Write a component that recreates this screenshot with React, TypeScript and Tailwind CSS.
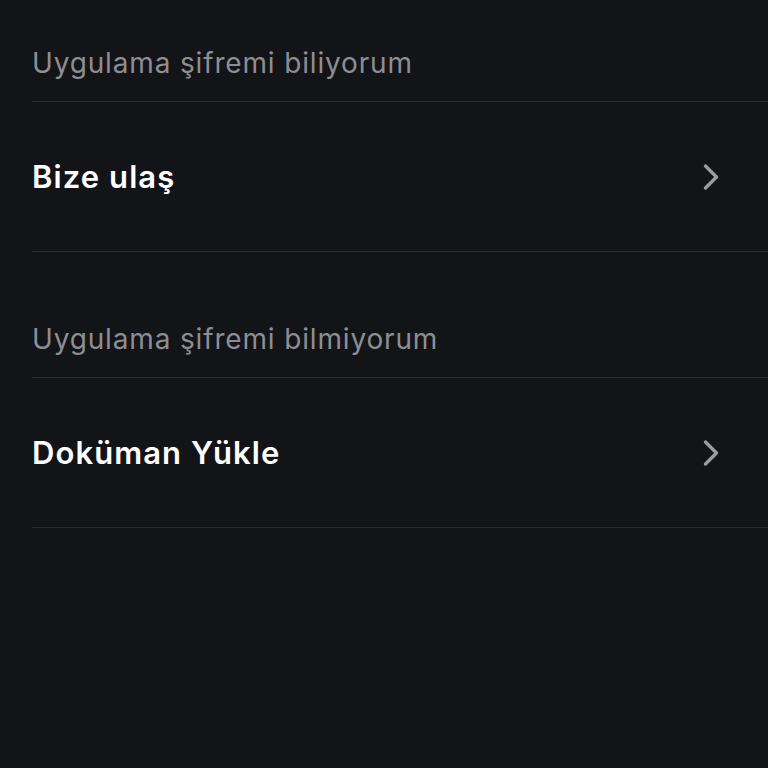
import React from 'react';

const Chevron = () => (
  <svg width="24" height="28" viewBox="0 0 24 28" fill="none" className="shrink-0">
    <path d="M7.5 3 L18.5 14 L7.5 25" stroke="#9b9ca1" strokeWidth="3.4" strokeLinecap="round" strokeLinejoin="round" />
  </svg>
);

const SectionHeader: React.FC<{ title: string; height: string }> = ({ title, height }) => (
  <div className={`flex items-end ${height} pb-[23px] border-b border-[#2a2b30]`}>
    <span className="text-[28px] leading-[30px] tracking-[0.03em] text-[#8d8e93]">{title}</span>
  </div>
);

const Row: React.FC<{ label: string }> = ({ label }) => (
  <div className="flex items-center justify-between h-[150px] border-b border-[#2a2b30] pr-[46px]">
    <span className="text-[31px] leading-[36px] tracking-[0.035em] font-semibold text-white">{label}</span>
    <Chevron />
  </div>
);

export default function App() {
  return (
    <div
      className="w-[768px] h-[768px] bg-[#131418] overflow-hidden pl-[32px]"
      style={{ fontFamily: 'Inter, "Noto Sans", sans-serif' }}
    >
      <SectionHeader title="Uygulama şifremi biliyorum" height="h-[102px]" />
      <Row label="Bize ulaş" />
      <SectionHeader title="Uygulama şifremi bilmiyorum" height="h-[126px]" />
      <Row label="Doküman Yükle" />
    </div>
  );
}
